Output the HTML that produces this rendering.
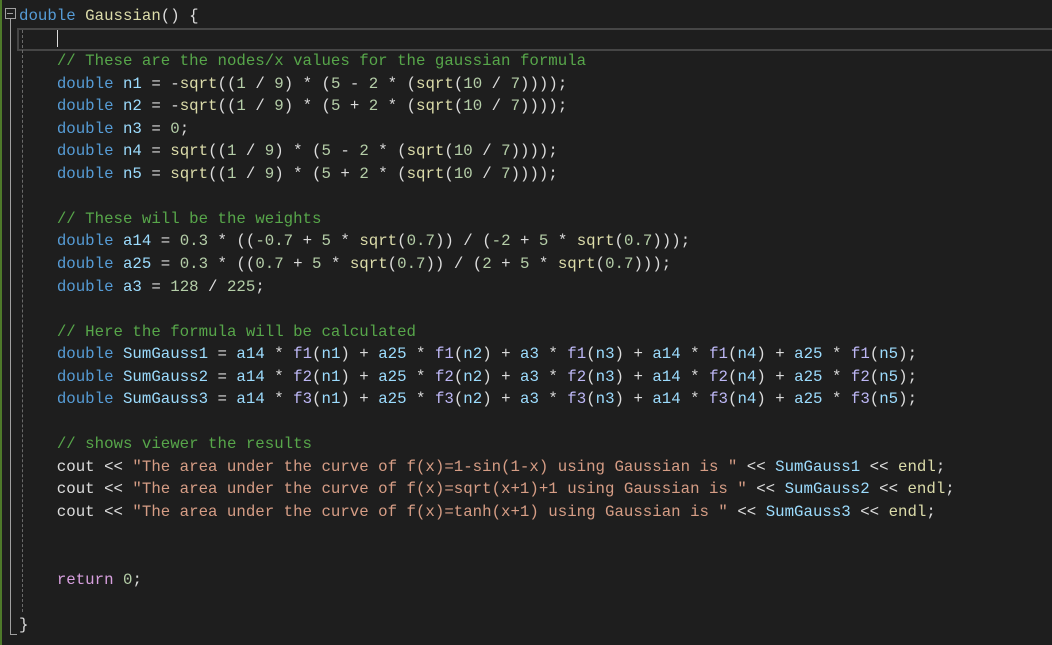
<!DOCTYPE html>
<html><head><meta charset="utf-8"><style>
html,body{margin:0;padding:0;background:#1e1e1e;width:1052px;height:645px;overflow:hidden;position:relative}
pre{position:absolute;left:19px;top:5px;margin:0;font-family:"Liberation Mono",monospace;font-size:15.75px;line-height:22.55px;color:#dcdcdc;white-space:pre}
.k{color:#569cd6}.v{color:#9cdcfe}.f{color:#dcdcaa}.n{color:#b5cea8}.c{color:#57a64a}.s{color:#d69d85}.r{color:#d8a0df}.m{color:#bdb7f5}
</style></head><body>
<div style="position:absolute;left:0;top:0;width:2px;height:645px;background:#4e7a2a"></div>
<div style="position:absolute;left:5px;top:8px;width:9px;height:9px;border:1px solid #a0a0a0"></div>
<div style="position:absolute;left:7px;top:13px;width:6px;height:1px;background:#a0a0a0"></div>
<div style="position:absolute;left:10px;top:19px;width:1px;height:616px;background:#a0a0a0"></div>
<div style="position:absolute;left:10px;top:634px;width:7px;height:1px;background:#a0a0a0"></div>
<div style="position:absolute;left:17px;top:28px;width:1040px;height:19px;border:2px solid #464646"></div>
<div style="position:absolute;left:57px;top:30px;width:1px;height:17px;background:#dcdcdc"></div>
<div style="position:absolute;left:22px;top:30px;width:0;height:582px;border-left:1px dashed #6a6a6a"></div>
<pre><span class="k">double</span> <span class="f">Gaussian</span>() {

    <span class="c">// These are the nodes/x values for the gaussian formula</span>
    <span class="k">double</span> <span class="v">n1</span> = -<span class="f">sqrt</span>((<span class="n">1</span> / <span class="n">9</span>) * (<span class="n">5</span> - <span class="n">2</span> * (<span class="f">sqrt</span>(<span class="n">10</span> / <span class="n">7</span>))));
    <span class="k">double</span> <span class="v">n2</span> = -<span class="f">sqrt</span>((<span class="n">1</span> / <span class="n">9</span>) * (<span class="n">5</span> + <span class="n">2</span> * (<span class="f">sqrt</span>(<span class="n">10</span> / <span class="n">7</span>))));
    <span class="k">double</span> <span class="v">n3</span> = <span class="n">0</span>;
    <span class="k">double</span> <span class="v">n4</span> = <span class="f">sqrt</span>((<span class="n">1</span> / <span class="n">9</span>) * (<span class="n">5</span> - <span class="n">2</span> * (<span class="f">sqrt</span>(<span class="n">10</span> / <span class="n">7</span>))));
    <span class="k">double</span> <span class="v">n5</span> = <span class="f">sqrt</span>((<span class="n">1</span> / <span class="n">9</span>) * (<span class="n">5</span> + <span class="n">2</span> * (<span class="f">sqrt</span>(<span class="n">10</span> / <span class="n">7</span>))));

    <span class="c">// These will be the weights</span>
    <span class="k">double</span> <span class="v">a14</span> = <span class="n">0.3</span> * ((<span class="n">-0.7</span> + <span class="n">5</span> * <span class="f">sqrt</span>(<span class="n">0.7</span>)) / (<span class="n">-2</span> + <span class="n">5</span> * <span class="f">sqrt</span>(<span class="n">0.7</span>)));
    <span class="k">double</span> <span class="v">a25</span> = <span class="n">0.3</span> * ((<span class="n">0.7</span> + <span class="n">5</span> * <span class="f">sqrt</span>(<span class="n">0.7</span>)) / (<span class="n">2</span> + <span class="n">5</span> * <span class="f">sqrt</span>(<span class="n">0.7</span>)));
    <span class="k">double</span> <span class="v">a3</span> = <span class="n">128</span> / <span class="n">225</span>;

    <span class="c">// Here the formula will be calculated</span>
    <span class="k">double</span> <span class="v">SumGauss1</span> = <span class="v">a14</span> * <span class="m">f1</span>(<span class="v">n1</span>) + <span class="v">a25</span> * <span class="m">f1</span>(<span class="v">n2</span>) + <span class="v">a3</span> * <span class="m">f1</span>(<span class="v">n3</span>) + <span class="v">a14</span> * <span class="m">f1</span>(<span class="v">n4</span>) + <span class="v">a25</span> * <span class="m">f1</span>(<span class="v">n5</span>);
    <span class="k">double</span> <span class="v">SumGauss2</span> = <span class="v">a14</span> * <span class="m">f2</span>(<span class="v">n1</span>) + <span class="v">a25</span> * <span class="m">f2</span>(<span class="v">n2</span>) + <span class="v">a3</span> * <span class="m">f2</span>(<span class="v">n3</span>) + <span class="v">a14</span> * <span class="m">f2</span>(<span class="v">n4</span>) + <span class="v">a25</span> * <span class="m">f2</span>(<span class="v">n5</span>);
    <span class="k">double</span> <span class="v">SumGauss3</span> = <span class="v">a14</span> * <span class="m">f3</span>(<span class="v">n1</span>) + <span class="v">a25</span> * <span class="m">f3</span>(<span class="v">n2</span>) + <span class="v">a3</span> * <span class="m">f3</span>(<span class="v">n3</span>) + <span class="v">a14</span> * <span class="m">f3</span>(<span class="v">n4</span>) + <span class="v">a25</span> * <span class="m">f3</span>(<span class="v">n5</span>);

    <span class="c">// shows viewer the results</span>
    cout &lt;&lt; <span class="s">"The area under the curve of f(x)=1-sin(1-x) using Gaussian is "</span> &lt;&lt; <span class="v">SumGauss1</span> &lt;&lt; <span class="f">endl</span>;
    cout &lt;&lt; <span class="s">"The area under the curve of f(x)=sqrt(x+1)+1 using Gaussian is "</span> &lt;&lt; <span class="v">SumGauss2</span> &lt;&lt; <span class="f">endl</span>;
    cout &lt;&lt; <span class="s">"The area under the curve of f(x)=tanh(x+1) using Gaussian is "</span> &lt;&lt; <span class="v">SumGauss3</span> &lt;&lt; <span class="f">endl</span>;


    <span class="r">return</span> <span class="n">0</span>;

}</pre>
</body></html>
